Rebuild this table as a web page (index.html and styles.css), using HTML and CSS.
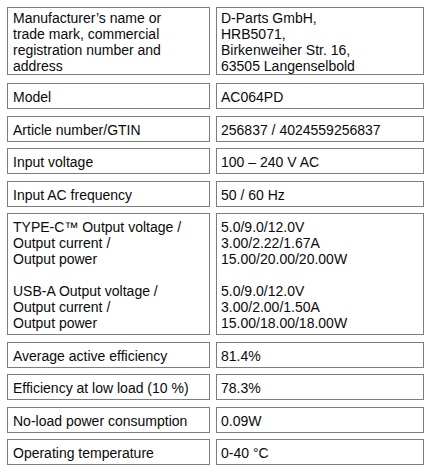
FILE: index.html
```html
<!DOCTYPE html>
<html lang="en">
<head>
<meta charset="utf-8">
<title>Product information</title>
<link rel="stylesheet" href="styles.css">
</head>
<body>
<div class="specs">
  <div class="cell label first">Manufacturer’s name or<br>trade mark, commercial<br>registration number and<br>address</div>
  <div class="cell value first">D-Parts GmbH,<br>HRB5071,<br>Birkenweiher Str. 16,<br>63505 Langenselbold</div>

  <div class="cell label">Model</div>
  <div class="cell value">AC064PD</div>

  <div class="cell label">Article number/GTIN</div>
  <div class="cell value">256837 / 4024559256837</div>

  <div class="cell label">Input voltage</div>
  <div class="cell value">100 – 240 V AC</div>

  <div class="cell label">Input AC frequency</div>
  <div class="cell value">50 / 60 Hz</div>

  <div class="cell label">
    <p class="para">TYPE-C™ Output voltage /<br>Output current /<br>Output power</p>
    <p class="para">USB-A Output voltage /<br>Output current /<br>Output power</p>
  </div>
  <div class="cell value">
    <p class="para">5.0/9.0/12.0V<br>3.00/2.22/1.67A<br>15.00/20.00/20.00W</p>
    <p class="para">5.0/9.0/12.0V<br>3.00/2.00/1.50A<br>15.00/18.00/18.00W</p>
  </div>

  <div class="cell label">Average active efficiency</div>
  <div class="cell value">81.4%</div>

  <div class="cell label">Efficiency at low load (10 %)</div>
  <div class="cell value">78.3%</div>

  <div class="cell label">No-load power consumption</div>
  <div class="cell value">0.09W</div>

  <div class="cell label">Operating temperature</div>
  <div class="cell value">0-40 °C</div>
</div>
</body>
</html>
```

FILE: styles.css
```css
html, body {
  margin: 0;
  padding: 0;
  background: #ffffff;
}

body {
  font-family: "Liberation Sans", Arial, sans-serif;
  font-size: 14px;
  line-height: 16px;
  color: #0a0a0a;
}

.specs {
  display: grid;
  grid-template-columns: 203px 208px;
  column-gap: 6px;
  row-gap: 6.5px;
  padding: 7px 0 0 7px;
}

.cell {
  border: 1px solid #7d7d7d;
  padding: 5px 5px 3px 5px;
}

.cell.first {
  padding-top: 2px;
  padding-bottom: 0;
  margin-bottom: 1.5px;
}

.value {
  padding-left: 4px;
}

.para {
  margin: 0;
}

.para + .para {
  margin-top: 16px;
}
```
